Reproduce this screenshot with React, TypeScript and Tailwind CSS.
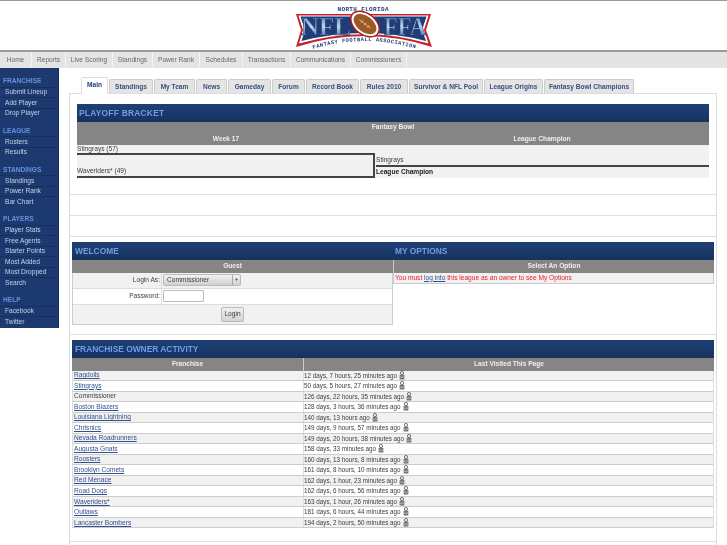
const navItems = [
  ["Home", "w-[32px]"],
  ["Reports", "w-[34px]"],
  ["Live Scoring", "w-[47px]"],
  ["Standings", "w-[40px]"],
  ["Power Rank", "w-[47px]"],
  ["Schedules", "w-[43px]"],
  ["Transactions", "w-[48px]"],
  ["Communications", "w-[60px]"],
  ["Commissioners", "w-[56px]"],
];

const tabs = [
  ["Standings", "w-[44px]"],
  ["My Team", "w-[41px]"],
  ["News", "w-[31px]"],
  ["Gameday", "w-[43px]"],
  ["Forum", "w-[33px]"],
  ["Record Book", "w-[53px]"],
  ["Rules 2010", "w-[48px]"],
  ["Survivor & NFL Pool", "w-[74px]"],
  ["League Origins", "w-[59px]"],
  ["Fantasy Bowl Champions", "w-[90px]"],
];

const sideMenu = [
  { title: "FRANCHISE", items: ["Submit Lineup", "Add Player", "Drop Player"] },
  { title: "LEAGUE", items: ["Rosters", "Results"] },
  { title: "STANDINGS", items: ["Standings", "Power Rank", "Bar Chart"] },
  { title: "PLAYERS", items: ["Player Stats", "Free Agents", "Starter Points", "Most Added", "Most Dropped", "Search"] },
  { title: "HELP", items: ["Facebook", "Twitter"] },
];

const owners = [
  ["Ragdolls", "12 days, 7 hours, 25 minutes ago"],
  ["Stingrays", "50 days, 5 hours, 27 minutes ago"],
  ["Commissioner", "126 days, 22 hours, 35 minutes ago"],
  ["Boston Blazers", "128 days, 3 hours, 36 minutes ago"],
  ["Louisiana Lightning", "140 days, 13 hours ago"],
  ["Chrisnics", "149 days, 9 hours, 57 minutes ago"],
  ["Nevada Roadrunners", "149 days, 20 hours, 38 minutes ago"],
  ["Augusta Gnats", "158 days, 33 minutes ago"],
  ["Roosters", "160 days, 13 hours, 8 minutes ago"],
  ["Brooklyn Comets", "161 days, 8 hours, 10 minutes ago"],
  ["Red Menace", "162 days, 1 hour, 23 minutes ago"],
  ["Road Dogs", "162 days, 6 hours, 56 minutes ago"],
  ["Waveriders*", "163 days, 1 hour, 26 minutes ago"],
  ["Outlaws", "181 days, 6 hours, 44 minutes ago"],
  ["Lancaster Bombers", "194 days, 2 hours, 50 minutes ago"],
];

function Logo() {
  return (
    <svg viewBox="0 0 138 45" className="h-[45px] w-[138px]">
      <defs>
        <linearGradient id="steel" x1="0" y1="0" x2="0" y2="1">
          <stop offset="0" stopColor="#3a6cb6" />
          <stop offset="0.5" stopColor="#bdd4ee" />
          <stop offset="1" stopColor="#2c5aa0" />
        </linearGradient>
      </defs>
      <path d="M1 9 H136 L131 25 L137 42 Q70 20 1 42 L6 25 Z" fill="#c4222a" />
      <path d="M3.5 10.5 H133.5 L129 25 L133.5 38.5 Q70 20 4 38.5 L8 25 Z" fill="#ffffff" />
      <path d="M5.5 11.5 H131.5 L127 25 L131 36 Q70 20 6.5 36 L10 25 Z" fill="#1f3d78" />
      <text x="31" y="30" textAnchor="middle" fontFamily="Liberation Serif" fontWeight="700" fontSize="25" fill="url(#steel)" stroke="#16305c" strokeWidth="0.5" textLength="50" lengthAdjust="spacingAndGlyphs">NFL</text>
      <text x="110" y="30" textAnchor="middle" fontFamily="Liberation Serif" fontWeight="700" fontSize="25" fill="url(#steel)" stroke="#16305c" strokeWidth="0.5" textLength="42" lengthAdjust="spacingAndGlyphs">FFA</text>
      <g transform="rotate(38 70 19)">
        <ellipse cx="70" cy="19" rx="16" ry="10.5" fill="#fff" stroke="#b01f28" strokeWidth="1.5" />
        <ellipse cx="70" cy="19" rx="13" ry="8" fill="#9a5a24" />
        <path d="M63 19H77M66 17.5V20.5M70 17.5V20.5M74 17.5V20.5" stroke="#f3e6d0" strokeWidth="0.6" />
      </g>
      <text x="68" y="5.5" textAnchor="middle" fontFamily="Liberation Mono" fontWeight="700" fontSize="6" fill="#1f3d78" textLength="51">NORTH FLORIDA</text>
      <path id="arc" d="M18 44 Q70 28 122 44" fill="none" />
      <text fontFamily="Liberation Mono" fontWeight="700" fontSize="5.4" fill="#1f3d78">
        <textPath href="#arc" textLength="104">FANTASY FOOTBALL ASSOCIATION</textPath>
      </text>
    </svg>
  );
}

function OwnerIcon() {
  return (
    <svg viewBox="0 0 6 9" className="ml-[2px] inline-block h-[9px] w-[6px] shrink-0">
      <circle cx="3" cy="2" r="1.6" fill="none" stroke="#555" strokeWidth="0.8" />
      <rect x="0.6" y="3.8" width="4.8" height="4.8" rx="0.6" fill="#777" />
      <path d="M0.8 6.2H5.2" stroke="#ddd" strokeWidth="0.6" />
    </svg>
  );
}

function TitleBar({ children, className = "pl-[3px]" }: { children: string; className?: string }) {
  return (
    <div className={`flex h-[18px] items-center bg-gradient-to-b from-[#1f3f75] to-[#16335f] pt-[1px] text-[8.4px] font-bold text-[#6f9de6] ${className}`}>
      {children}
    </div>
  );
}

function ColHead({ children, className = "" }: { children?: string; className?: string }) {
  return (
    <div className={`flex h-[12.5px] items-center justify-center bg-[#858585] font-bold text-[#eeeeee] ${className}`}>
      {children}
    </div>
  );
}

export default function App() {
  return (
    <div className="h-[545px] w-[727px] overflow-hidden bg-white font-['Liberation_Sans',Arial,sans-serif] text-[6.6px] text-[#3c3c3c] blur-[0.35px]">
      <header className="flex h-[50px] justify-center border-t border-[#999]">
        <div className="pt-[4px]">
          <Logo />
        </div>
      </header>

      <nav className="flex h-[18px] border-t-2 border-[#9a9a9a] bg-[#e4e4e4] pb-[1px] text-[#666]">
        {navItems.map(([label, w]) => (
          <div key={label} className={`flex items-center justify-center border-r border-[#f4f4f4] ${w}`}>
            {label}
          </div>
        ))}
      </nav>

      <div className="flex">
        <aside className="h-[260px] w-[59px] shrink-0 border-r border-[#14305f] bg-[#1c3a70] pt-[8px] text-[#c4d0e4]">
          {sideMenu.map((group) => (
            <div key={group.title} className="mb-[7.5px]">
              <div className="flex h-[10.5px] items-center pl-[3px] font-bold text-[#6690d8]">{group.title}</div>
              {group.items.map((item) => (
                <div key={item} className="flex h-[10.5px] items-center border-t border-[#16305c] pl-[5px]">
                  {item}
                </div>
              ))}
            </div>
          ))}
        </aside>

        <main className="ml-[10px] w-[648px]">
          <div className="flex h-[25px] items-end pl-[12px] font-bold text-[#34507f]">
            <div className="mb-[-1px] flex h-[17px] w-[27px] items-center justify-center rounded-t-[2px] border border-b-0 border-[#ddd] bg-white pb-[2px] text-[#1f3d78]">Main</div>
            {tabs.map(([label, w]) => (
              <div key={label} className={`ml-[1px] flex h-[14px] items-center justify-center rounded-t-[2px] border border-b-0 border-[#ccc] bg-[#e4e4e4] ${w}`}>
                {label}
              </div>
            ))}
          </div>

          <div className="border-l border-r border-[#ddd]">
            <section className="h-[101px] border-t border-[#ddd] px-[7px] pt-[10px]">
              <TitleBar className="pl-[2px] tracking-[0.25px]">PLAYOFF BRACKET</TitleBar>
              <div className="flex h-[10.5px] items-center justify-center bg-[#858585] font-bold text-[#eee]">Fantasy Bowl</div>
              <div className="flex">
                <ColHead className="w-[298px]">Week 17</ColHead>
                <ColHead className="flex-1">League Champion</ColHead>
              </div>
              <div className="flex bg-[#f0f1f0]">
                <div className="w-[298px]">
                  <div className="flex h-[10px] items-center border-b-2 border-[#444]">Stingrays (57)</div>
                  <div className="flex h-[22.5px] items-end border-b-2 border-r-2 border-[#444]">Waveriders* (49)</div>
                </div>
                <div className="flex-1 pl-[1px]">
                  <div className="flex h-[22px] items-end border-b-2 border-[#444]">Stingrays</div>
                  <div className="flex h-[10.5px] items-center font-bold text-[#222]">League Champion</div>
                </div>
              </div>
            </section>

            <div className="h-[21px] border-t border-[#e0e0e0]" />
            <div className="h-[21px] border-t border-[#e0e0e0]" />

            <section className="flex h-[98px] border-t border-[#e0e0e0] px-[2px] pt-[5px]">
              <div className="w-[321px]">
                <TitleBar>WELCOME</TitleBar>
                <ColHead>Guest</ColHead>
                <div className="border-b border-l border-r border-[#ccc]">
                  <div className="flex h-[16px] border-b border-[#ddd] bg-[#f0f1f0]">
                    <div className="flex w-[88px] items-center justify-end pr-[1px]">Login As:</div>
                    <div className="flex flex-1 items-center border-l border-[#ddd] pl-[1px]">
                      <div className="flex h-[12px] w-[78px] items-center justify-between rounded-[2px] border border-[#bbb] bg-gradient-to-b from-[#f2f2f2] to-[#d0d0d0]">
                        <span className="pl-[3px]">Commissioner</span>
                        <span className="flex h-full w-[8px] items-center justify-center border-l border-[#aaa] text-[4px] text-[#333]">▼</span>
                      </div>
                    </div>
                  </div>
                  <div className="flex h-[16px] border-b border-[#ddd] bg-white">
                    <div className="flex w-[88px] items-center justify-end pr-[1px]">Password:</div>
                    <div className="flex flex-1 items-center border-l border-[#ddd] pl-[1px]">
                      <div className="h-[12px] w-[41px] rounded-[1px] border border-[#bbb] bg-white" />
                    </div>
                  </div>
                  <div className="flex h-[19px] items-center justify-center bg-[#f0f1f0]">
                    <div className="flex h-[15px] w-[23px] items-center justify-center rounded-[2px] border border-[#bbb] bg-gradient-to-b from-[#eeeeee] to-[#d4d4d4]">Login</div>
                  </div>
                </div>
              </div>
              <div className="flex-1">
                <TitleBar className="pl-[2px]">MY OPTIONS</TitleBar>
                <ColHead className="border-l border-[#ccc]">Select An Option</ColHead>
                <div className="flex h-[11px] items-center border-b border-l border-r border-[#ccc] bg-[#f0f1f0] pl-[1px] text-[#e8202a]">
                  You must&nbsp;<a className="text-[#33508f] underline">log into</a>&nbsp;this league as an owner to see My Options
                </div>
              </div>
            </section>

            <section className="h-[207px] border-t border-[#e0e0e0] px-[2px] pt-[5px]">
              <TitleBar>FRANCHISE OWNER ACTIVITY</TitleBar>
              <div className="flex">
                <ColHead className="w-[231px]">Franchise</ColHead>
                <ColHead className="flex-1 border-l border-[#ccc]">Last Visited This Page</ColHead>
              </div>
              <div className="border-l border-r border-[#ddd]">
                {owners.map(([name, when], i) => (
                  <div key={name} className={`flex h-[10.53px] border-b border-[#ccc] ${i % 2 === 0 ? "bg-[#f0f1f0]" : "bg-white"}`}>
                    <div className="flex w-[230px] items-center pl-[1px]">
                      {name === "Commissioner" ? name : <a className="text-[#33508f] underline">{name}</a>}
                    </div>
                    <div className="flex flex-1 items-center border-l border-[#ddd] text-[6.3px]">
                      {when}
                      <OwnerIcon />
                    </div>
                  </div>
                ))}
              </div>
            </section>
            <div className="h-[8px] border-t border-[#e0e0e0]" />
          </div>
        </main>
      </div>
    </div>
  );
}
